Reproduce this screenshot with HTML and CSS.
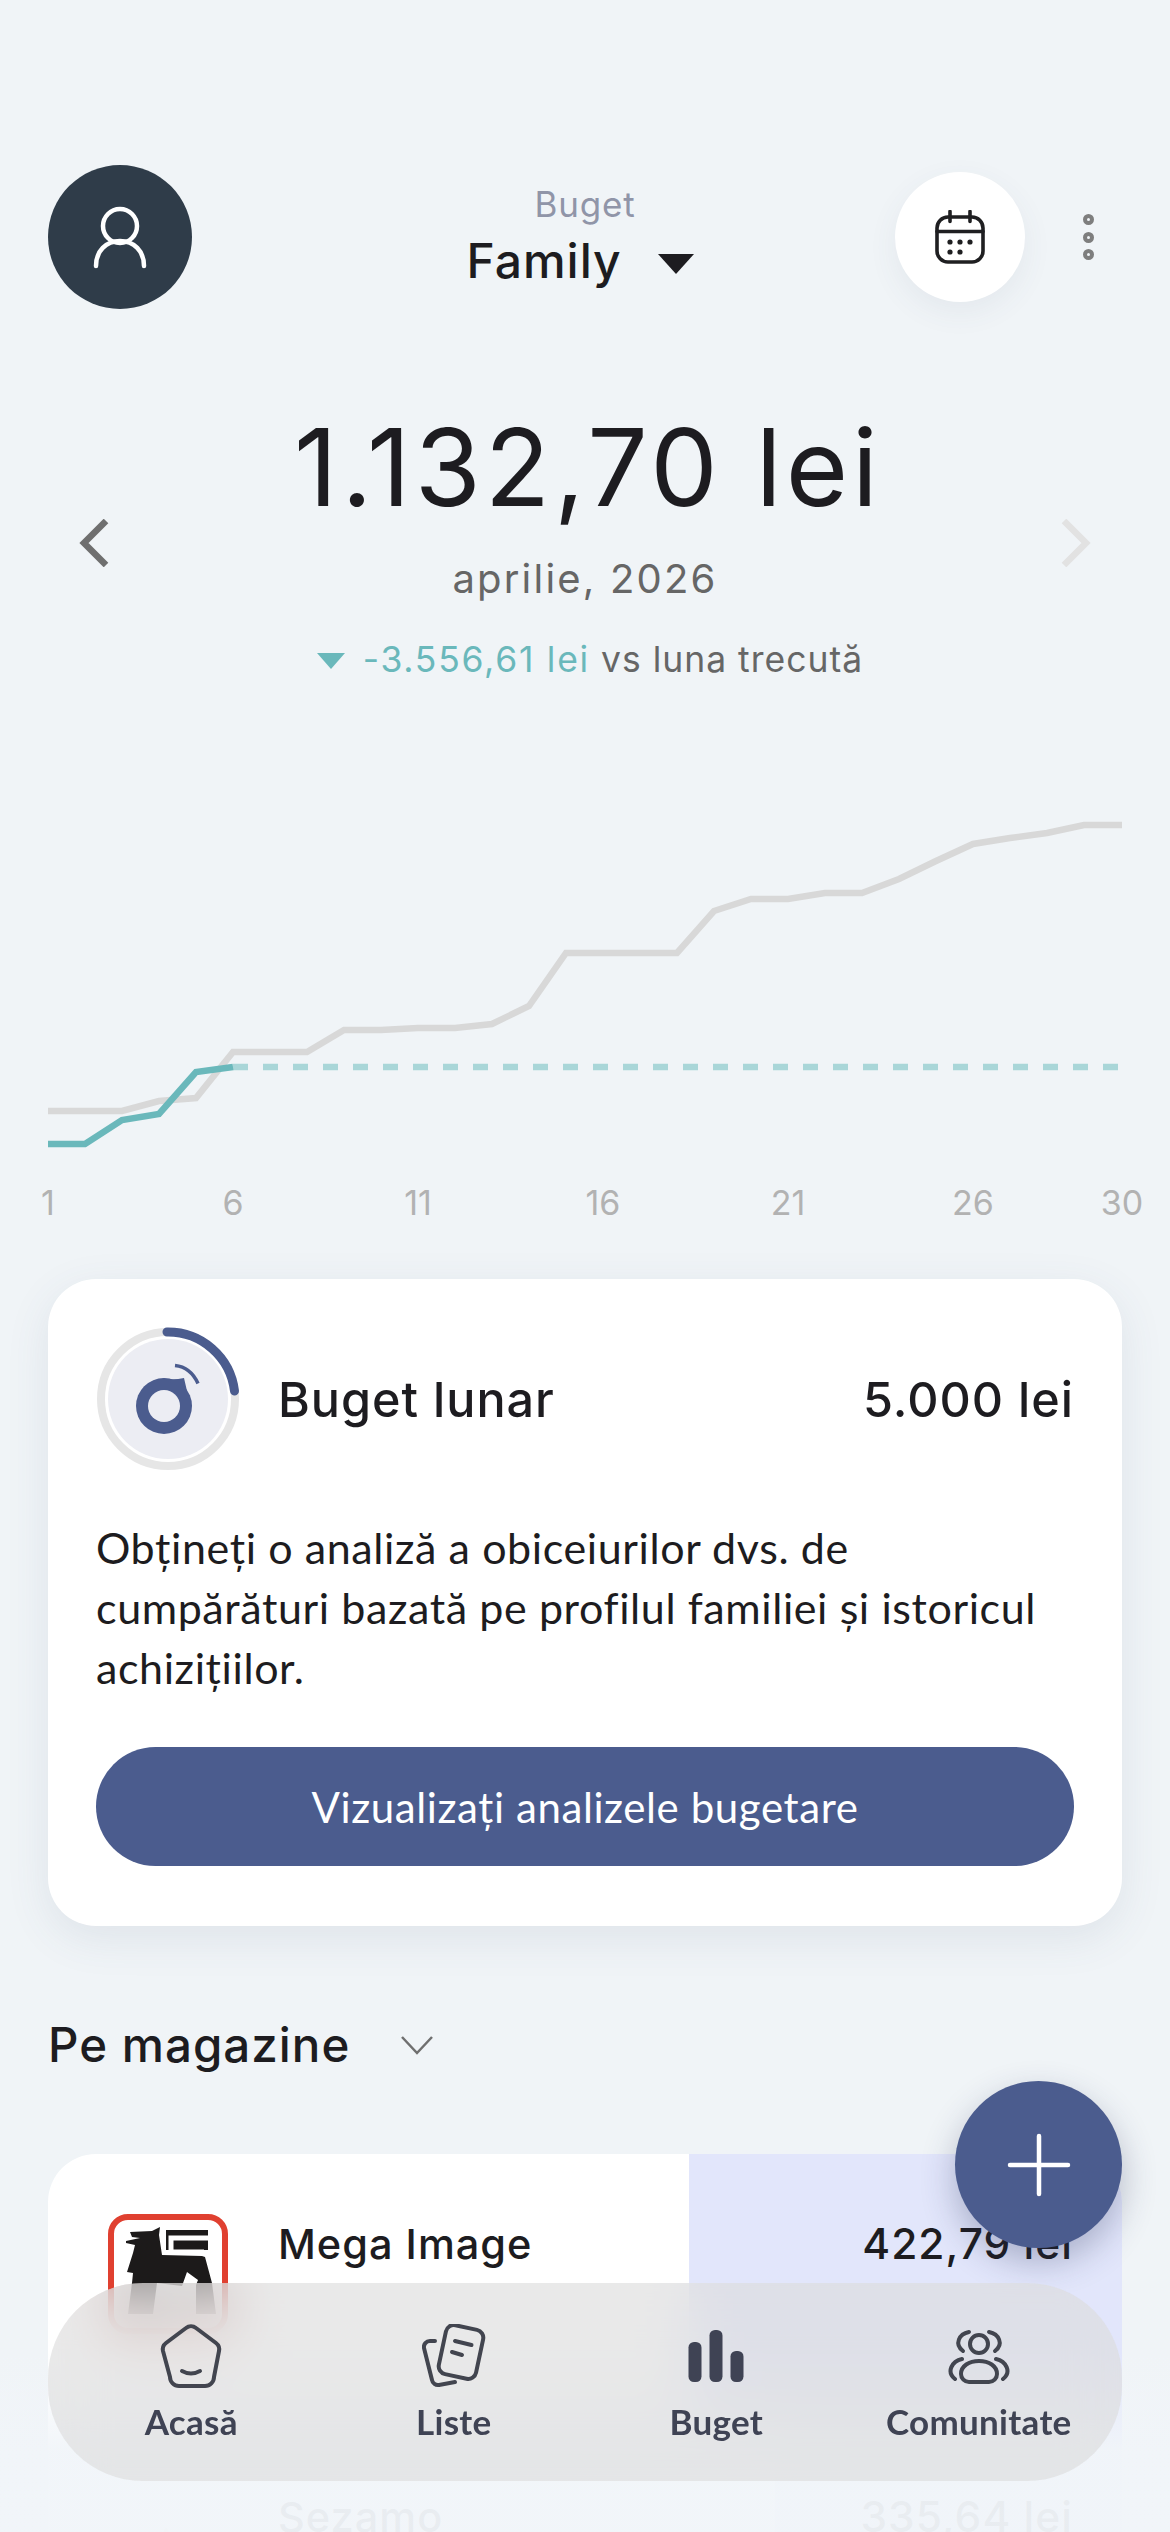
FILE: index.html
```html
<!DOCTYPE html>
<html lang="ro">
<head>
    <meta charset="UTF-8">
    <meta name="viewport" content="width=device-width, initial-scale=1.0">
    <title>Buget</title>
    <link rel="stylesheet" href="styles.css">
</head>
<body>

<div class="screen">

    <header class="header">
        <div class="avatar">
            <svg width="54" height="64" viewBox="0 0 54 64" fill="none" stroke="#fff" stroke-width="4.5" stroke-linecap="round">
                <circle cx="27" cy="21" r="17"/>
                <path d="M3 61c0-15 10-25 24-25s24 10 24 25"/>
            </svg>
        </div>
        <div class="title">
            <div class="title-small">Buget</div>
            <div class="title-big">Family <span class="caret"></span></div>
        </div>
        <div class="actions">
            <div class="calendar">
                <svg width="50" height="54" viewBox="0 0 50 54" fill="none" stroke="#1f1f21" stroke-width="3.6" stroke-linecap="round">
                    <rect x="2" y="7" width="46" height="45" rx="11"/>
                    <path d="M2 21.5h46M15 1.5v10M35 1.5v10"/>
                    <g fill="#1f1f21" stroke="none">
                        <circle cx="15" cy="32" r="2.6"/><circle cx="25" cy="32" r="2.6"/><circle cx="35" cy="32" r="2.6"/>
                        <circle cx="15" cy="42" r="2.6"/><circle cx="25" cy="42" r="2.6"/>
                    </g>
                </svg>
            </div>
            <div class="dots"><span></span><span></span><span></span></div>
        </div>
    </header>

    <section class="summary">
        <svg class="arrow" width="32" height="48" viewBox="0 0 32 48" fill="none" stroke="#6f6f6f" stroke-width="6.5"><path d="M28 2 6 24l22 22"/></svg>
        <div class="summary-text">
            <div class="amount">1.132,70 lei</div>
            <div class="month">aprilie, 2026</div>
            <div class="delta"><span class="delta-caret"></span><span class="delta-value">-3.556,61 lei</span> vs luna trecută</div>
        </div>
        <svg class="arrow" width="32" height="48" viewBox="0 0 32 48" fill="none" stroke="#e2e2e2" stroke-width="6.5"><path d="M4 2l22 22L4 46"/></svg>
    </section>

    <svg class="chart" width="1170" height="420" viewBox="0 810 1170 420" fill="none">
        <polyline stroke="#d8d8d8" stroke-width="6.5" points="48,1110 85,1110 122,1110 159,1100 196,1097 233,1051 270,1051 307,1051 344,1029 381,1029 418,1027 455,1027 492,1023 529,1005 566,952 603,952 640,952 677,952 714,910 751,898 788,898 825,892 862,892 899,878 936,860 973,843 1010,837 1047,832 1084,824 1122,824"/>
        <path stroke="#a9d6d8" stroke-width="6.5" stroke-dasharray="15 15" d="M233 1066H1122"/>
        <polyline stroke="#6ab8bb" stroke-width="6.5" points="48,1143 85,1143 122,1119 159,1113 196,1071 233,1066"/>
        <g class="chart-label" text-anchor="middle">
            <text x="48" y="1214">1</text>
            <text x="233" y="1214">6</text>
            <text x="418" y="1214">11</text>
            <text x="603" y="1214">16</text>
            <text x="788" y="1214">21</text>
            <text x="973" y="1214">26</text>
            <text x="1122" y="1214">30</text>
        </g>
    </svg>

    <section class="card budget">
        <div class="budget-head">
            <svg class="ring" width="144" height="144" viewBox="0 0 144 144" fill="none">
                <circle cx="72" cy="72" r="67" stroke="#e6e6e6" stroke-width="8"/>
                <circle cx="72" cy="72" r="60" fill="#ecedf3"/>
                <path d="M71 5A67 67 0 0 1 138.500 64" stroke="#4b5c8e" stroke-width="9" stroke-linecap="round"/>
                <circle cx="68" cy="79" r="28" fill="#4b5c8e"/>
                <path d="M66 51.500c8 1 15 1 22-.5l3 13z" fill="#4b5c8e"/>
                <circle cx="68" cy="79" r="16" fill="#ecedf3"/>
                <path d="M79 38.500c10 1 18 7 23 18" stroke="#4b5c8e" stroke-width="3.500"/>
            </svg>
            <div class="budget-name">Buget lunar</div>
            <div class="budget-value">5.000 lei</div>
        </div>
        <p class="budget-text">Obțineți o analiză a obiceiurilor dvs. de cumpărături bazată pe profilul familiei și istoricul achizițiilor.</p>
        <div class="primary-btn">Vizualizați analizele bugetare</div>
    </section>

    <div class="section-title">
        <span>Pe magazine</span>
        <svg width="34" height="20" viewBox="0 0 34 20" fill="none" stroke="#6f6f6f" stroke-width="2.500"><path d="M2 2l15 16L32 2"/></svg>
    </div>

    <section class="card stores">
        <div class="store" style="--w: 40.3%">
            <svg class="store-logo" width="120" height="120" viewBox="0 0 120 120">
                <rect x="3" y="3" width="114" height="114" rx="17" fill="#fff" stroke="#e04030" stroke-width="6"/>
                <polygon fill="#1c1a1a" points="22,18 44,17 52,13 51,21 54,41 94,42 97,43 104,69 108,100 88,100 88,71 90,66 79,58 74,72 49,69 45,100 20,100 24,69 25,59 19,58 25,39 27,31 18,29 18,27 32,24 24,23"/>
                <rect x="58" y="16" width="42" height="20" fill="#1c1a1a"/>
                <path d="M100 24H63v14h33" fill="none" stroke="#fff" stroke-width="5"/>
            </svg>
            <div class="store-name">Mega Image</div>
            <div class="store-value">422,79 lei</div>
        </div>
        <div class="store" style="--w: 32.3%">
            <svg class="store-logo" width="120" height="120" viewBox="0 0 120 120">
                <path d="M58 40c8 10 6 30-4 46-6-14-4-34 4-46z" fill="#e9e3c8"/>
            </svg>
            <div class="store-name">Sezamo</div>
            <div class="store-value">335,64 lei</div>
        </div>
    </section>

    <div class="bottom-fade"></div>

    <div class="fab">
        <svg width="64" height="64" viewBox="0 0 64 64" fill="none" stroke="#fff" stroke-width="4.500" stroke-linecap="round"><path d="M32 3v58M3 32h58"/></svg>
    </div>

    <nav class="tabbar">
        <div class="tab">
            <svg width="64" height="64" viewBox="0 0 64 64" fill="none" stroke="#42454f" stroke-width="4" stroke-linecap="round" stroke-linejoin="round">
                <path d="M27 4a8 8 0 0 1 10 0l20 15a8 8 0 0 1 3 8l-5 26a9 9 0 0 1-9 9H20a9 9 0 0 1-9-9L4 27a8 8 0 0 1 3-8z"/>
                <path d="M23 47q9 5 18 0"/>
            </svg>
            <span>Acasă</span>
        </div>
        <div class="tab">
            <svg width="64" height="64" viewBox="0 0 64 64" fill="none" stroke="#42454f" stroke-width="4" stroke-linecap="round" stroke-linejoin="round">
                <rect x="20" y="3" width="38" height="50" rx="8" transform="rotate(12 39 28)"/>
                <path d="M33 17l16.500 4M30 28l10 3"/>
                <path d="M13 17H8a6 6 0 0 0-6 7l8 32a6 6 0 0 0 7 5l16-3"/>
            </svg>
            <span>Liste</span>
        </div>
        <div class="tab">
            <svg width="64" height="64" viewBox="0 0 64 64" fill="#3f4354">
                <rect x="4.500" y="18" width="13" height="40" rx="5.500"/>
                <rect x="25.500" y="6" width="13" height="52" rx="5.500"/>
                <rect x="46.500" y="27" width="13" height="31" rx="5.500"/>
            </svg>
            <span>Buget</span>
        </div>
        <div class="tab">
            <svg width="64" height="64" viewBox="0 0 64 64" fill="none" stroke="#42454f" stroke-width="4" stroke-linecap="round" stroke-linejoin="round">
                <circle cx="32" cy="20" r="9"/>
                <path d="M22 8c-10 2-15 12-6 19M42 8c10 2 15 12 6 19"/>
                <path d="M22 58h20a8 8 0 0 0 8-8c0-8-8-13-18-13s-18 5-18 13a8 8 0 0 0 8 8z"/>
                <path d="M15 35C5 37-1 48 8 55M49 35c10 2 16 13 7 20"/>
            </svg>
            <span>Comunitate</span>
        </div>
    </nav>

</div>

</body>
</html>
```

FILE: styles.css
```css
body {
    margin: 0;
    padding: 0;
    background-color: #f0f4f7;
    font-family: Inter, "Liberation Sans", sans-serif;
    color: #1d1c20;
}

.screen {
    position: relative;
    width: 1170px;
    height: 2532px;
    overflow: hidden;
    background-color: #f0f4f7;
}

/* header */
.header {
    display: grid;
    grid-template-columns: 1fr auto 1fr;
    align-items: center;
    padding: 165px 48px 0;
}

.avatar {
    width: 144px;
    height: 144px;
    border-radius: 50%;
    background-color: #2f3c49;
    display: flex;
    align-items: center;
    justify-content: center;
}

.title {
    padding-top: 3px;
    text-align: center;
}

.title-small {
    font-size: 35px;
    line-height: 44px;
    color: #9095a8;
    letter-spacing: 0.8px;
}

.title-big {
    font-size: 48px;
    line-height: 70px;
    font-weight: 500;
    letter-spacing: 1px;
    padding-right: 10px;
}

.caret {
    display: inline-block;
    width: 0;
    height: 0;
    margin-left: 22px;
    border-left: 18px solid transparent;
    border-right: 18px solid transparent;
    border-top: 20px solid #1d1c20;
    vertical-align: 4px;
}

.actions {
    display: flex;
    align-items: center;
    justify-content: flex-end;
    gap: 57.5px;
    padding-right: 28.5px;
}

.calendar {
    width: 130px;
    height: 130px;
    border-radius: 50%;
    background-color: #fff;
    box-shadow: 0 10px 30px rgba(70, 90, 120, 0.07);
    display: flex;
    align-items: center;
    justify-content: center;
}

.dots {
    display: flex;
    flex-direction: column;
    gap: 6.5px;
}

.dots span {
    display: block;
    width: 3px;
    height: 3px;
    border: 4.5px solid #7e7e7e;
    border-radius: 50%;
    background-color: #f0f4f7;
    box-sizing: content-box;
}

/* summary */
.summary {
    display: flex;
    align-items: center;
    justify-content: space-between;
    padding: 93px 78px 0;
}

.summary-text {
    text-align: center;
}

.amount {
    padding-left: 6px;
    font-size: 107px;
    line-height: 130px;
    letter-spacing: 4px;
}

.month {
    margin-top: 19px;
    font-size: 40px;
    line-height: 56px;
    color: #666;
    letter-spacing: 2.2px;
}

.delta {
    margin-top: 29px;
    padding-left: 10px;
    font-size: 35.5px;
    line-height: 48px;
    color: #666;
    letter-spacing: 1px;
}

.delta-caret {
    display: inline-block;
    width: 0;
    height: 0;
    margin-right: 18px;
    border-left: 14px solid transparent;
    border-right: 14px solid transparent;
    border-top: 16px solid #6ab8bb;
    vertical-align: 3px;
}

.delta-value {
    color: #6ab8bb;
    letter-spacing: 1.75px;
}

/* chart */
.chart {
    display: block;
    margin-top: 127px;
}

.chart-label text {
    font-size: 34px;
    fill: #b2b2b2;
}

/* cards */
.card {
    margin: 48px 48px 0;
    background-color: #fff;
    border-radius: 48px;
}

.budget {
    padding: 48px 48px 60px;
    box-shadow: 0 12px 44px rgba(70, 90, 120, 0.1);
}

.budget-head {
    display: flex;
    align-items: center;
    font-size: 48.5px;
    font-weight: 500;
    letter-spacing: 1px;
}

.ring {
    flex: none;
    margin-right: 38px;
}

.budget-name {
    flex: 1;
}

.budget-text {
    margin: 47px 0 0;
    font-family: Lato, "Noto Sans", sans-serif;
    font-size: 43px;
    line-height: 60px;
    letter-spacing: 0.6px;
    color: #1d1c20;
}

.primary-btn {
    margin-top: 49px;
    height: 119px;
    border-radius: 60px;
    background-color: #4b5c8e;
    color: #fff;
    font-family: Lato, "Noto Sans", sans-serif;
    font-size: 42px;
    letter-spacing: 0.6px;
    display: flex;
    align-items: center;
    justify-content: center;
}

.section-title {
    display: flex;
    align-items: center;
    gap: 50px;
    margin: 87px 48px 0;
    font-size: 47.5px;
    line-height: 64px;
    font-weight: 500;
    letter-spacing: 1px;
}

.stores {
    margin-top: 77px;
    height: 600px;
    overflow: hidden;
}

.store {
    display: flex;
    align-items: flex-start;
    height: 273px;
    padding: 60px 49px 0 60px;
    box-sizing: border-box;
    font-size: 41.5px;
    font-weight: 500;
    letter-spacing: 1px;
    background: linear-gradient(to left, #e2e6fb var(--w), transparent var(--w));
}

.store-logo {
    flex: none;
    margin-right: 50px;
}

.store-name {
    flex: 1;
    margin-top: 5px;
}

.store-value {
    margin-top: 4px;
    font-size: 42.5px;
}

.bottom-fade {
    position: absolute;
    left: 0;
    right: 0;
    bottom: 0;
    height: 180px;
    background: linear-gradient(to bottom, rgba(241, 245, 249, 0), rgba(241, 245, 249, 0.96) 55%);
}

/* floating items */
.fab {
    position: absolute;
    left: 955px;
    top: 2081px;
    width: 167px;
    height: 167px;
    border-radius: 50%;
    background-color: #4b5c8e;
    box-shadow: 0 14px 34px rgba(40, 50, 90, 0.3);
    display: flex;
    align-items: center;
    justify-content: center;
}

.tabbar {
    position: absolute;
    left: 48px;
    top: 2283px;
    width: 1074px;
    height: 198px;
    border-radius: 95px;
    box-sizing: border-box;
    padding: 41px 12px 0;
    background-color: rgba(220, 220, 220, 0.62);
    -webkit-backdrop-filter: blur(28px);
    backdrop-filter: blur(28px);
    display: grid;
    grid-template-columns: repeat(4, 1fr);
}

.tab {
    display: flex;
    flex-direction: column;
    align-items: center;
    gap: 13px;
    font-family: Lato, "Noto Sans", sans-serif;
    font-size: 35px;
    font-weight: 700;
    line-height: 40px;
    letter-spacing: 0.3px;
    color: #3f4354;
}

.tab svg {
    display: block;
}
```
